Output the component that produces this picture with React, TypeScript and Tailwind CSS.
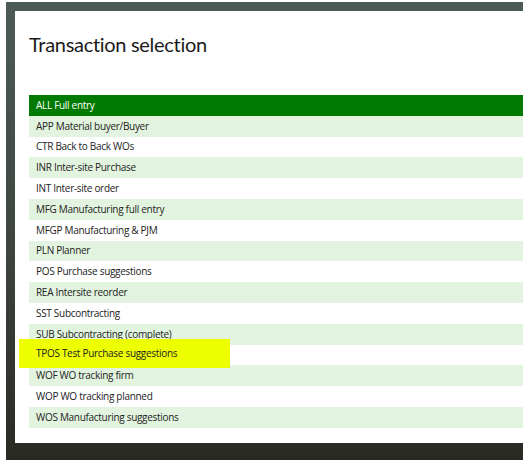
import React from "react";

const rows = [
  "ALL Full entry",
  "APP Material buyer/Buyer",
  "CTR Back to Back WOs",
  "INR Inter-site Purchase",
  "INT Inter-site order",
  "MFG Manufacturing full entry",
  "MFGP Manufacturing & PJM",
  "PLN Planner",
  "POS Purchase suggestions",
  "REA Intersite reorder",
  "SST Subcontracting",
  "SUB Subcontracting (complete)",
  "TPOS Test Purchase suggestions",
  "WOF WO tracking firm",
  "WOP WO tracking planned",
  "WOS Manufacturing suggestions",
];

const App = () => {
  return (
    <div className="w-[530px] h-[467px] bg-white overflow-hidden" style={{ fontFamily: "'Open Sans', 'Noto Sans', sans-serif" }}>
      <div className="ml-[6px] mt-[2px] w-[517px] h-[458px] flex flex-col pl-[9px] pt-[9px] pb-[17px] bg-gradient-to-b from-[#4c5b56] via-[#3f4640] to-[#2a2a24]">
        <div className="relative flex-1 bg-white pl-[14px]">
          <h1 className="mt-[19px] h-[65px] text-[20px] leading-[28px] tracking-[-0.3px] text-[#1a1a1a] font-['Lato',sans-serif]">
            Transaction selection
          </h1>
          <div className="flex flex-col">
            {rows.map((name, index) => (
              <div
                key={name}
                className={`h-[20.8px] flex items-center pl-[7px] text-[10px] tracking-[-0.3px] ${
                  index === 0
                    ? "bg-[#017a01] text-white"
                    : index % 2 === 1
                    ? "bg-[#e2f4df] text-[#222222]"
                    : "bg-white text-[#222222]"
                }`}
              >
                {name}
              </div>
            ))}
          </div>
          <div className="absolute left-[4px] top-[328px] w-[211px] h-[29px] bg-[#eeff00] flex items-center pl-[17px] text-[10px] tracking-[-0.3px] text-[#222222]">
            TPOS Test Purchase suggestions
          </div>
        </div>
      </div>
    </div>
  );
};

export default App;
